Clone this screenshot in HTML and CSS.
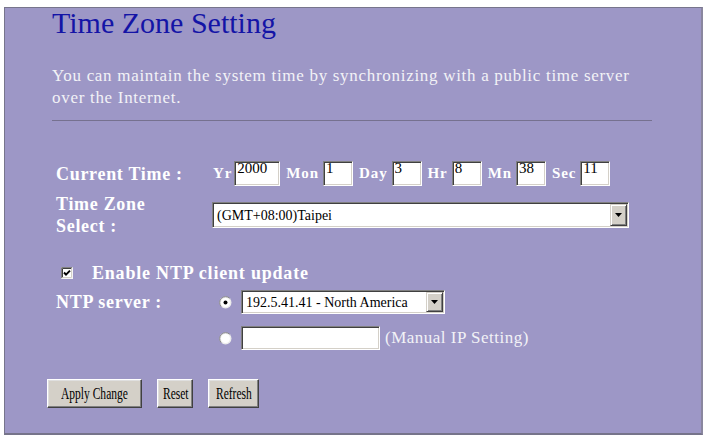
FILE: index.html
```html
<!DOCTYPE html>
<html>
<head>
<meta charset="utf-8">
<title>Time Zone Setting</title>
<link rel="stylesheet" href="styles.css">
</head>
<body>
<div class="panel">
  <div class="header">
    <h1 class="title">Time Zone Setting</h1>
    <p class="desc">You can maintain the system time by synchronizing with a public time server over the Internet.</p>
    <div class="rule"></div>
  </div>
  <form class="form">
    <div class="row row-time">
      <div class="label">Current Time :</div>
      <div class="field">
        <span class="unit unit-first">Yr</span><input class="text w-yr" value="2000">
        <span class="unit">Mon</span><input class="text w-sm" value="1">
        <span class="unit">Day</span><input class="text w-sm" value="3">
        <span class="unit">Hr</span><input class="text w-sm" value="8">
        <span class="unit">Mn</span><input class="text w-sm" value="38">
        <span class="unit">Sec</span><input class="text w-sm" value="11">
      </div>
    </div>
    <div class="row row-zone">
      <div class="label">Time Zone<br>Select :</div>
      <div class="field">
        <span class="select-wrap">
          <select class="select sel-zone"><option>(GMT+08:00)Taipei</option></select>
          <span class="arrow"><svg width="7" height="4" viewBox="0 0 7 4"><path d="M0 0H7L3.5 4Z" fill="#000"/></svg></span>
        </span>
      </div>
    </div>
    <div class="row row-check">
      <span class="check"><svg width="12" height="12" viewBox="0 0 12 12"><rect x="0" y="0" width="12" height="12" fill="#fff"/><path d="M0.5 11.5V0.5H11.5" fill="none" stroke="#808080"/><path d="M1.5 10.5V1.5H10.5" fill="none" stroke="#404040"/><path d="M0.5 11.5H11.5V0.5" fill="none" stroke="#f4f4f4"/><path d="M1.5 10.5H10.5V1.5" fill="none" stroke="#d4d0c8"/><path d="M3 5.5L5 7.6L9 3.6" fill="none" stroke="#000" stroke-width="2"/></svg></span>
      <span class="check-label">Enable NTP client update</span>
    </div>
    <div class="row row-ntp">
      <div class="label">NTP server :</div>
      <div class="field">
        <span class="radio"><svg width="13" height="13" viewBox="0 0 13 13"><circle cx="6.5" cy="6.5" r="6" fill="#ececec"/><path d="M2.26 10.74A6 6 0 0 1 10.74 2.26" fill="none" stroke="#8a8a8a"/><circle cx="6.5" cy="6.5" r="4.5" fill="#fff"/><circle cx="6.5" cy="6.5" r="2" fill="#000"/></svg></span>
        <span class="select-wrap">
          <select class="select sel-ntp"><option>192.5.41.41 - North America</option></select>
          <span class="arrow"><svg width="7" height="4" viewBox="0 0 7 4"><path d="M0 0H7L3.5 4Z" fill="#000"/></svg></span>
        </span>
      </div>
    </div>
    <div class="row row-manual">
      <div class="label"></div>
      <div class="field">
        <span class="radio"><svg width="13" height="13" viewBox="0 0 13 13"><circle cx="6.5" cy="6.5" r="6" fill="#ececec"/><path d="M2.26 10.74A6 6 0 0 1 10.74 2.26" fill="none" stroke="#8a8a8a"/><circle cx="6.5" cy="6.5" r="4.5" fill="#fff"/></svg></span>
        <input class="text w-ip" value="">
        <span class="note">(Manual IP Setting)</span>
      </div>
    </div>
    <div class="buttons">
      <button type="button" class="btn btn-apply"><span>Apply Change</span></button>
      <button type="button" class="btn btn-reset"><span>Reset</span></button>
      <button type="button" class="btn btn-refresh"><span>Refresh</span></button>
    </div>
  </form>
</div>
</body>
</html>
```

FILE: styles.css
```css
html, body {
  margin: 0;
  padding: 0;
  background: #ffffff;
}
body {
  font-family: "Liberation Serif", "Times New Roman", serif;
}
.panel {
  box-sizing: border-box;
  width: 699px;
  height: 428px;
  margin: 7px 0 0 4px;
  padding-left: 42px;
  background: #9d97c6;
  border-top: 1px solid #77758c;
  border-left: 1px solid #77758c;
  border-right: 2px solid #8a879f;
  border-bottom: 2px solid #76748a;
}
.header {
  margin-left: 5px;
  width: 600px;
}
.title {
  margin: 0;
  font-size: 30px;
  line-height: 30px;
  font-weight: normal;
  color: #1414a6;
}
.desc {
  margin: 27px 0 0;
  font-size: 17px;
  line-height: 22px;
  letter-spacing: 0.7px;
  color: #f2f2f6;
}
.rule {
  margin-top: 11px;
  height: 1px;
  background: #76718f;
}
.form {
  margin: 40px 0 0;
}
.row {
  display: flex;
  align-items: center;
  padding-left: 9px;
}
.label {
  width: 156px;
  flex: none;
  font-size: 18px;
  line-height: 22px;
  font-weight: bold;
  color: #ffffff;
  letter-spacing: 0.7px;
}
.field {
  display: flex;
  align-items: center;
}
.row-zone { margin-top: 7px; }
.row-check { margin-top: 25px; padding-left: 14px; }
.row-ntp { margin-top: 6px; }
.row-manual { margin-top: 12px; }

.unit {
  font-size: 15px;
  font-weight: bold;
  color: #ffffff;
  letter-spacing: 0.9px;
  margin: 0 4px 0 0;
}
.unit-first { margin-left: 1px; margin-right: 2px; }
.text {
  box-sizing: border-box;
  height: 25px;
  margin: 0 6px 0 0;
  padding: 0 2px 10px;
  font-family: "Liberation Serif", "Times New Roman", serif;
  font-size: 15px;
  line-height: 13px;
  color: #000;
  background: #ffffff;
  border: 1px solid;
  border-color: #808080 #ffffff #ffffff #808080;
  box-shadow: inset 1px 1px #404040, inset -1px -1px #d4d0c8;
  border-radius: 0;
  outline: none;
}
.w-yr { width: 46px; }
.w-sm { width: 30px; }
.w-ip { width: 139px; height: 24px; margin-right: 5px; }

.select-wrap {
  position: relative;
  display: inline-block;
}
.select {
  -webkit-appearance: none;
  appearance: none;
  display: block;
  box-sizing: border-box;
  margin: 0;
  height: 26px;
  padding: 0 20px 0 4px;
  font-family: "Liberation Serif", "Times New Roman", serif;
  font-size: 14px;
  color: #000;
  background: #ffffff;
  border: 1px solid;
  border-color: #808080 #ffffff #ffffff #808080;
  box-shadow: inset 1px 1px #404040, inset -1px -1px #d4d0c8;
  border-radius: 0;
  outline: none;
}
.sel-zone { width: 417px; }
.sel-ntp { width: 204px; height: 24px; }
.arrow {
  position: absolute;
  top: 2px;
  right: 2px;
  bottom: 2px;
  width: 17px;
  box-sizing: border-box;
  background: #d4d0c8;
  border: 1px solid;
  border-color: #d4d0c8 #404040 #404040 #d4d0c8;
  box-shadow: inset 1px 1px #ffffff, inset -1px -1px #808080;
  display: flex;
  align-items: center;
  justify-content: center;
  pointer-events: none;
}
.arrow svg { display: block; }

.check {
  display: block;
  width: 12px;
  height: 12px;
}
.check svg, .radio svg { display: block; }
.check-label {
  margin-left: 19px;
  font-size: 18px;
  line-height: 22px;
  font-weight: bold;
  color: #ffffff;
  letter-spacing: 0.8px;
}
.radio {
  display: block;
  width: 13px;
  height: 13px;
  margin: 0 9px 0 7px;
}
.note {
  font-size: 17px;
  color: #f2f2f6;
  letter-spacing: 0.5px;
}

.buttons {
  margin-top: 29px;
  display: flex;
  gap: 15px;
}
.btn {
  box-sizing: border-box;
  height: 29px;
  margin: 0;
  padding: 0;
  font-family: "Liberation Serif", "Times New Roman", serif;
  font-size: 16px;
  color: #000;
  background: #d4d0c8;
  border: 1px solid;
  border-color: #ffffff #404040 #404040 #ffffff;
  box-shadow: inset -1px -1px #808080, inset 1px 1px #dfdfdf;
  border-radius: 0;
  white-space: nowrap;
}
.btn span {
  display: inline-block;
  transform: scaleX(0.72);
}
.btn-apply { width: 95px; }
.btn-reset { width: 36px; }
.btn-refresh { width: 51px; }
```
